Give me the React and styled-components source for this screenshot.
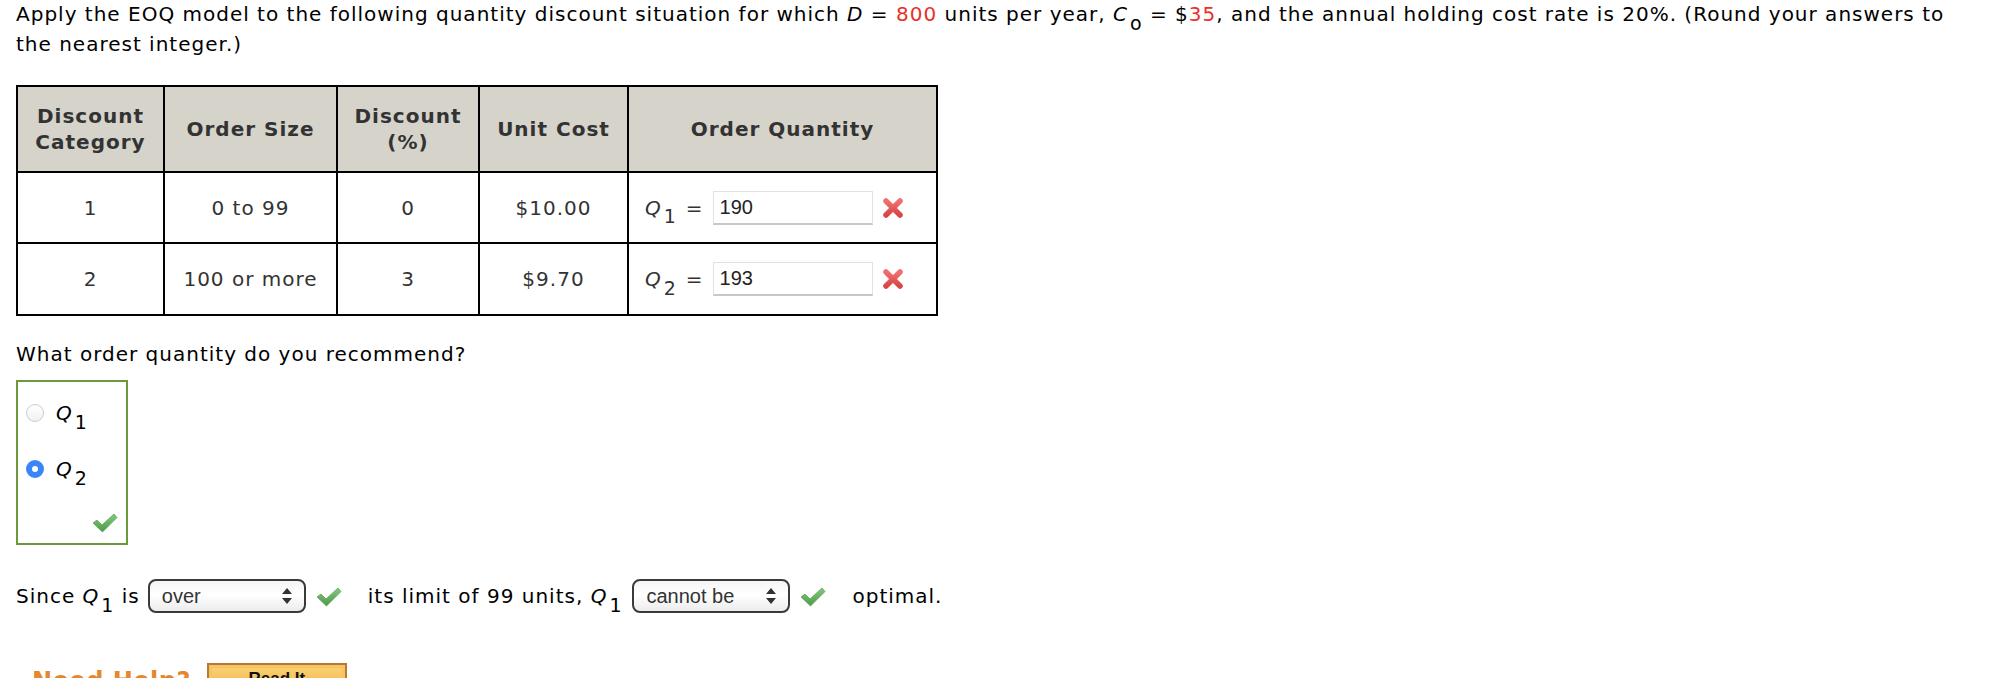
import React from 'react';
import styled, { createGlobalStyle } from 'styled-components';

const GlobalStyle = createGlobalStyle`
  body {
    margin: 0;
    background: #ffffff;
    font-family: Verdana, 'DejaVu Sans', sans-serif;
    color: #000000;
  }
`;

const Page = styled.div`
  padding: 0 16px;
  width: 1978px;
  box-sizing: border-box;
  font-size: 20px;
  line-height: 30px;
  letter-spacing: 1px;
`;

const Intro = styled.p`
  margin: -1px 0 0;
  line-height: 30px;
`;

const Red = styled.span`
  color: #e8312a;
`;

const Var = styled.span`
  font-style: italic;
  white-space: nowrap;
`;

const Sub = styled.sub`
  font-style: normal;
  font-size: 0.95em;
  line-height: 0;
  vertical-align: -0.45em;
  margin-left: 2px;
`;

const Table = styled.table`
  margin-top: 26px;
  border-collapse: collapse;
  table-layout: fixed;
  width: 920px;
  border: 2px solid #000;
  color: #333333;
`;

const HeadCell = styled.th`
  height: 84px;
  padding: 0 4px;
  background: #d6d3cb;
  border: 2px solid #000;
  font-weight: bold;
  line-height: 26px;
  text-align: center;
  color: #333333;
`;

const Cell = styled.td`
  height: ${p => p.$h}px;
  padding: 0 4px;
  border: 2px solid #000;
  text-align: center;
  line-height: 26px;
`;

const QtyCell = styled.td`
  border: 2px solid #000;
  padding: 0 0 0 16px;
`;

const QtyRow = styled.div`
  display: flex;
  align-items: center;
  color: #333333;
`;

const Eq = styled.span`
  margin: 0 9px 0 9px;
`;

const Answer = styled.div`
  width: 160px;
  height: 34px;
  box-sizing: border-box;
  border: 1px solid #e2e2e2;
  border-bottom: 2px solid #c8c8c8;
  padding: 0 6px;
  font-family: 'Liberation Sans', Arial, sans-serif;
  font-size: 20px;
  letter-spacing: 0;
  line-height: 31px;
  color: #222222;
  background: #fff;
`;

const Mark = styled.svg`
  flex: none;
  margin-left: ${p => p.$ml || 0}px;
`;

const Question = styled.p`
  margin: 23px 0 0;
`;

const ChoiceBox = styled.div`
  margin-top: 11px;
  width: 112px;
  height: 165px;
  box-sizing: border-box;
  border: 2px solid #6a9a3c;
  padding: 17px 0 0 8px;
  display: flex;
  flex-direction: column;
`;

const Choice = styled.label`
  display: flex;
  align-items: center;
  height: 28px;
  margin-bottom: 28px;
`;

const Radio = styled.span`
  width: 18px;
  height: 18px;
  box-sizing: border-box;
  border-radius: 50%;
  margin-right: 12px;
  flex: none;
  border: ${p => (p.$on ? '6px solid #3b86f7' : '1px solid #cfcfcf')};
  background: ${p => (p.$on ? '#ffffff' : 'linear-gradient(#ffffff, #f1f1f1)')};
`;

const BoxCheck = styled.div`
  margin-top: auto;
  margin-bottom: 10px;
  align-self: flex-end;
  margin-right: 8px;
  display: flex;
`;

const Sentence = styled.div`
  margin-top: 34px;
  display: flex;
  align-items: center;
  white-space: nowrap;
`;

const SelectWrap = styled.span`
  position: relative;
  display: inline-flex;
  margin: 0 ${p => p.$mr || 10}px 0 ${p => p.$ml || 8}px;
`;

const Select = styled.select`
  appearance: none;
  -webkit-appearance: none;
  width: 158px;
  height: 34px;
  box-sizing: border-box;
  border: 2px solid #3a3a3a;
  border-radius: 8px;
  padding: 0 0 0 12px;
  background: linear-gradient(#f4f4f4, #ffffff 45%, #ececec);
  font-family: 'Liberation Sans', Arial, sans-serif;
  font-size: 20px;
  letter-spacing: 0;
  color: #333333;
  outline: none;
`;

const Arrows = styled.svg`
  position: absolute;
  right: 14px;
  top: 9px;
  pointer-events: none;
`;

const Gap = styled.span`
  display: inline-block;
  width: ${p => p.$w}px;
`;

const Help = styled.div`
  margin-top: 49px;
  padding-left: 16px;
  display: flex;
  align-items: flex-start;
  gap: 16px;
`;

const HelpText = styled.span`
  margin-top: 4px;
  font-weight: bold;
  font-size: 24px;
  line-height: 30px;
  letter-spacing: 0.5px;
  color: #e4872e;
`;

const ReadButton = styled.button`
  width: 140px;
  height: 32px;
  margin-top: 1px;
  border: 2px solid #b9773a;
  background: linear-gradient(#fbd27a, #f2b23c);
  box-shadow: inset 0 0 0 3px #f7c560;
  font-family: 'Liberation Sans', Arial, sans-serif;
  font-weight: bold;
  font-size: 17px;
  color: #111;
  padding: 0;
`;

const Q = ({ n }) => (
  <Var>
    Q<Sub>{n}</Sub>
  </Var>
);

const Cross = () => (
  <Mark $ml={9} width="22" height="20" viewBox="0 0 22 20">
    <defs>
      <linearGradient id="xg" x1="0" y1="0" x2="0" y2="1">
        <stop offset="0" stopColor="#f07070" />
        <stop offset="1" stopColor="#d84545" />
      </linearGradient>
    </defs>
    <path d="M4 3 L18 17 M18 3 L4 17" stroke="url(#xg)" strokeWidth="5.5" strokeLinecap="round" />
  </Mark>
);

const Check = ({ ml = 0 }) => (
  <Mark $ml={ml} width="26" height="21" viewBox="0 0 26 21">
    <defs>
      <linearGradient id="cg" x1="0" y1="0" x2="0" y2="1">
        <stop offset="0" stopColor="#86c97a" />
        <stop offset="1" stopColor="#4c9a4a" />
      </linearGradient>
    </defs>
    <path d="M1 11 L5 8 L10 13 L22 2 L25 5.5 L10.5 20 Z" fill="url(#cg)" stroke="#5da55a" strokeWidth="0.8" strokeLinejoin="round" />
  </Mark>
);

const UpDown = () => (
  <Arrows width="10" height="16" viewBox="0 0 10 16">
    <path d="M5 0 L10 6 L0 6 Z M0 10 L10 10 L5 16 Z" fill="#333" />
  </Arrows>
);

const Dropdown = ({ value, ml, mr }) => (
  <SelectWrap $ml={ml} $mr={mr}>
    <Select defaultValue={value}>
      <option value="">---Select---</option>
      <option value="over">over</option>
      <option value="under">under</option>
      <option value="can be">can be</option>
      <option value="cannot be">cannot be</option>
    </Select>
    <UpDown />
  </SelectWrap>
);

const columns = [147, 173, 142, 149, 309];

const rows = [
  { cat: '1', size: '0 to 99', disc: '0', cost: '$10.00', q: '190', h: 69 },
  { cat: '2', size: '100 or more', disc: '3', cost: '$9.70', q: '193', h: 70 },
];

export default function App() {
  return (
    <>
      <GlobalStyle />
      <Page>
        <Intro>
          Apply the EOQ model to the following quantity discount situation for which <Var>D</Var> ={' '}
          <Red>800</Red> units per year, <Var>C<Sub>o</Sub></Var> = $<Red>35</Red>, and the annual holding
          cost rate is 20%. (Round your answers to the nearest integer.)
        </Intro>

        <Table>
          <colgroup>
            {columns.map((w, i) => (
              <col key={i} style={{ width: w }} />
            ))}
          </colgroup>
          <thead>
            <tr>
              <HeadCell>Discount<br />Category</HeadCell>
              <HeadCell>Order Size</HeadCell>
              <HeadCell>Discount<br />(%)</HeadCell>
              <HeadCell>Unit Cost</HeadCell>
              <HeadCell>Order Quantity</HeadCell>
            </tr>
          </thead>
          <tbody>
            {rows.map(r => (
              <tr key={r.cat}>
                <Cell $h={r.h}>{r.cat}</Cell>
                <Cell $h={r.h}>{r.size}</Cell>
                <Cell $h={r.h}>{r.disc}</Cell>
                <Cell $h={r.h}>{r.cost}</Cell>
                <QtyCell>
                  <QtyRow>
                    <Q n={r.cat} />
                    <Eq>=</Eq>
                    <Answer>{r.q}</Answer>
                    <Cross />
                  </QtyRow>
                </QtyCell>
              </tr>
            ))}
          </tbody>
        </Table>

        <Question>What order quantity do you recommend?</Question>

        <ChoiceBox>
          <Choice>
            <Radio />
            <Q n="1" />
          </Choice>
          <Choice>
            <Radio $on />
            <Q n="2" />
          </Choice>
          <BoxCheck>
            <Check />
          </BoxCheck>
        </ChoiceBox>

        <Sentence>
          Since&nbsp;<Q n="1" />&nbsp;is
          <Dropdown value="over" />
          <Check />
          <Gap $w={26} />
          its limit of 99 units,&nbsp;<Q n="1" />
          <Dropdown value="cannot be" ml={10} />
          <Check />
          <Gap $w={26} />
          optimal.
        </Sentence>

        <Help>
          <HelpText>Need Help?</HelpText>
          <ReadButton>Read It</ReadButton>
        </Help>
      </Page>
    </>
  );
}
